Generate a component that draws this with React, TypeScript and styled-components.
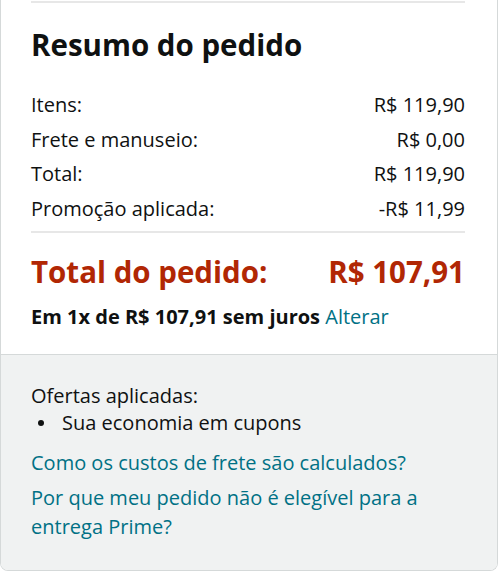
import React from 'react';
import styled, { createGlobalStyle } from 'styled-components';

const GlobalStyle = createGlobalStyle`
  html, body {
    margin: 0;
    padding: 0;
    background: #ffffff;
  }
  body {
    font-family: "Open Sans", "Noto Sans", Arial, sans-serif;
    color: #0f1111;
  }
`;

const Card = styled.div`
  width: 498px;
  box-sizing: border-box;
  border: 1px solid #d5d9d9;
  border-top: 0;
  border-radius: 0 0 8px 8px;
  overflow: hidden;
`;

const Summary = styled.div`
  padding: 0 32px 0 30px;
`;

const Divider = styled.hr`
  margin: 0;
  border: 0;
  border-top: 2px solid #e7e7e7;
`;

const TopDivider = styled(Divider)`
  margin-top: 1px;
`;

const Title = styled.h2`
  margin: 22px 0 23px;
  font-size: 29.5px;
  font-weight: 700;
  line-height: 40px;
`;

const Lines = styled.div`
  display: flex;
  flex-direction: column;
  padding-bottom: 5px;
`;

const Line = styled.div`
  display: flex;
  justify-content: space-between;
  font-size: 20px;
  line-height: 34.5px;
`;

const GrandTotal = styled.div`
  display: flex;
  justify-content: space-between;
  margin-top: 19px;
  font-size: 29.5px;
  font-weight: 700;
  line-height: 40px;
  color: #b12704;
`;

const Installments = styled.div`
  margin-top: 11px;
  padding-bottom: 23px;
  font-size: 20px;
  font-weight: 700;
  line-height: 28px;
`;

const Link = styled.a`
  color: #007185;
  font-weight: 400;
  text-decoration: none;
  cursor: pointer;
`;

const Footer = styled.div`
  background: #f0f2f2;
  border-top: 1px solid #d5d9d9;
  padding: 27px 32px 29px 30px;
  font-size: 20px;
  line-height: 29px;
`;

const OffersTitle = styled.div`
  line-height: 27px;
`;

const OfferList = styled.ul`
  margin: 0 0 12px;
  padding: 0;
  list-style: none;
  line-height: 27px;
`;

const Offer = styled.li`
  display: flex;
  align-items: center;

  &::before {
    content: '';
    width: 6px;
    height: 6px;
    margin: 0 18px 0 7px;
    border-radius: 50%;
    background: #0f1111;
  }
`;

const HelpLink = styled(Link)`
  display: block;
  margin-bottom: 6px;

  &:last-child {
    margin-bottom: 0;
  }
`;

export default function App() {
  return (
    <>
      <GlobalStyle />
      <Card>
        <Summary>
          <TopDivider />
          <Title>Resumo do pedido</Title>
          <Lines>
            <Line>
              <span>Itens:</span>
              <span>R$ 119,90</span>
            </Line>
            <Line>
              <span>Frete e manuseio:</span>
              <span>R$ 0,00</span>
            </Line>
            <Line>
              <span>Total:</span>
              <span>R$ 119,90</span>
            </Line>
            <Line>
              <span>Promoção aplicada:</span>
              <span>-R$ 11,99</span>
            </Line>
          </Lines>
          <Divider />
          <GrandTotal>
            <span>Total do pedido:</span>
            <span>R$ 107,91</span>
          </GrandTotal>
          <Installments>
            Em 1x de R$ 107,91 sem juros <Link>Alterar</Link>
          </Installments>
        </Summary>
        <Footer>
          <OffersTitle>Ofertas aplicadas:</OffersTitle>
          <OfferList>
            <Offer>Sua economia em cupons</Offer>
          </OfferList>
          <HelpLink>Como os custos de frete são calculados?</HelpLink>
          <HelpLink>Por que meu pedido não é elegível para a entrega Prime?</HelpLink>
        </Footer>
      </Card>
    </>
  );
}
